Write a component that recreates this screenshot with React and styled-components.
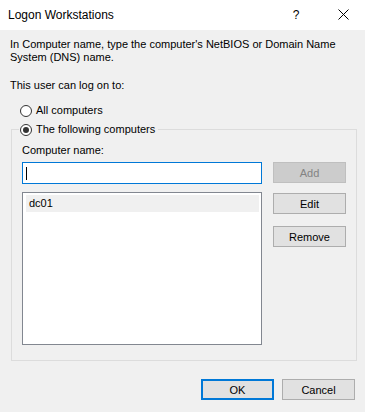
import React, { useState } from 'react';
import styled, { createGlobalStyle } from 'styled-components';

const GlobalStyle = createGlobalStyle`
  html, body {
    margin: 0;
    padding: 0;
    background: #ffffff;
  }
  * {
    box-sizing: border-box;
  }
`;

const COMPUTERS = ['dc01'];

const CloseIcon = () => (
  <svg width="11" height="11" viewBox="0 0 11 11">
    <path d="M0.5 0.5 L10.5 10.5 M10.5 0.5 L0.5 10.5" stroke="#000" strokeWidth="1" fill="none" />
  </svg>
);

const App = () => {
  const [mode, setMode] = useState('following');
  const [selected] = useState('dc01');

  return (
    <Window>
      <GlobalStyle />
      <TitleBar>
        <Title>Logon Workstations</Title>
        <TitleButtons>
          <HelpButton>?</HelpButton>
          <CloseButton>
            <CloseIcon />
          </CloseButton>
        </TitleButtons>
      </TitleBar>
      <Body>
        <Intro>
          In Computer name, type the computer's NetBIOS or Domain Name
          <br />
          System (DNS) name.
        </Intro>
        <Label>This user can log on to:</Label>
        <RadioRow onClick={() => setMode('all')}>
          <RadioCircle checked={mode === 'all'} />
          <RadioText>All computers</RadioText>
        </RadioRow>
        <Group>
          <Legend>
            <RadioRow onClick={() => setMode('following')} $tight>
              <RadioCircle checked={mode === 'following'} />
              <RadioText>The following computers</RadioText>
            </RadioRow>
          </Legend>
          <FieldLabel>Computer name:</FieldLabel>
          <GroupGrid>
            <LeftColumn>
              <NameInput>
                <Caret />
              </NameInput>
              <ComputerList>
                {COMPUTERS.map(name => (
                  <ListItem key={name} active={name === selected}>
                    {name}
                  </ListItem>
                ))}
              </ComputerList>
            </LeftColumn>
            <SideButtons>
              <Button disabled>Add</Button>
              <Button>Edit</Button>
              <Button $spaced>Remove</Button>
            </SideButtons>
          </GroupGrid>
        </Group>
        <Footer>
          <Button $primary>OK</Button>
          <Button>Cancel</Button>
        </Footer>
      </Body>
    </Window>
  );
};
export default App;

const Window = styled.div`
  width: 365px;
  height: 412px;
  display: flex;
  flex-direction: column;
  font-family: 'Liberation Sans', Arial, sans-serif;
  font-size: 11px;
  color: #000;
  overflow: hidden;
`;

const TitleBar = styled.div`
  height: 30px;
  display: flex;
  align-items: center;
  justify-content: space-between;
  background: #ffffff;
  padding-left: 8px;
`;

const Title = styled.div`
  font-size: 12px;
  margin-top: -1px;
`;

const TitleButtons = styled.div`
  display: flex;
  align-items: center;
`;

const HelpButton = styled.div`
  width: 46px;
  text-align: center;
  font-size: 12px;
  margin-top: -1px;
`;

const CloseButton = styled.div`
  width: 46px;
  height: 30px;
  display: flex;
  align-items: center;
  justify-content: center;
  padding: 0 0 1px 2px;
`;

const Body = styled.div`
  flex: 1;
  background: #f0f0f0;
  padding: 8px 0 0 10px;
  display: flex;
  flex-direction: column;
`;

const Intro = styled.div`
  line-height: 13px;
`;

const Label = styled.div`
  line-height: 13px;
  margin-top: 15px;
`;

const RadioRow = styled.label`
  display: flex;
  align-items: center;
  gap: 4px;
  height: 13px;
  margin: ${({ $tight }) => ($tight ? '0' : '12px 0 0 10px')};
  cursor: default;
`;

const RadioCircle = styled.span`
  width: 12px;
  height: 12px;
  border-radius: 50%;
  border: 1px solid #333333;
  background: #ffffff;
  display: flex;
  align-items: center;
  justify-content: center;
  &::after {
    content: '';
    width: 6px;
    height: 6px;
    border-radius: 50%;
    background: #333333;
    display: ${({ checked }) => (checked ? 'block' : 'none')};
  }
`;

const RadioText = styled.span`
  line-height: 13px;
`;

const Group = styled.fieldset`
  margin: 6px 8px 0 1px;
  padding: 8px 10px 15px 10px;
  border: 1px solid #dcdcdc;
  min-width: 0;
`;

const Legend = styled.legend`
  padding: 0 3px 0 1px;
  margin-left: -3px;
`;

const FieldLabel = styled.div`
  line-height: 13px;
`;

const GroupGrid = styled.div`
  display: grid;
  grid-template-columns: 240px 73px;
  justify-content: space-between;
  margin-top: 5px;
`;

const LeftColumn = styled.div`
  display: flex;
  flex-direction: column;
  gap: 8px;
`;

const NameInput = styled.div`
  height: 22px;
  background: #ffffff;
  border: 1px solid #0078d7;
  display: flex;
  align-items: center;
  padding-left: 3px;
`;

const Caret = styled.span`
  width: 1px;
  height: 13px;
  background: #000;
`;

const ComputerList = styled.div`
  height: 153px;
  background: #ffffff;
  border: 1px solid #828790;
  padding: 2px 2px 0 3px;
`;

const ListItem = styled.div`
  height: 17px;
  line-height: 17px;
  padding-left: 3px;
  background: ${({ active }) => (active ? '#f0f0f0' : 'transparent')};
`;

const SideButtons = styled.div`
  display: flex;
  flex-direction: column;
  gap: 11px;
  & > button:nth-child(2) {
    margin-top: -1px;
  }
`;

const Button = styled.button`
  width: 73px;
  height: 21px;
  padding: 0;
  font-family: 'Liberation Sans', Arial, sans-serif;
  font-size: 11px;
  color: #000;
  background: #e1e1e1;
  border: ${({ $primary }) => ($primary ? '2px solid #0078d7' : '1px solid #adadad')};
  margin-top: ${({ $spaced }) => ($spaced ? '1px' : '0')};
  &:disabled {
    background: #cccccc;
    border-color: #bfbfbf;
    color: #838383;
  }
`;

const Footer = styled.div`
  display: flex;
  justify-content: flex-end;
  gap: 8px;
  margin-top: 18px;
  padding-right: 10px;
`;
